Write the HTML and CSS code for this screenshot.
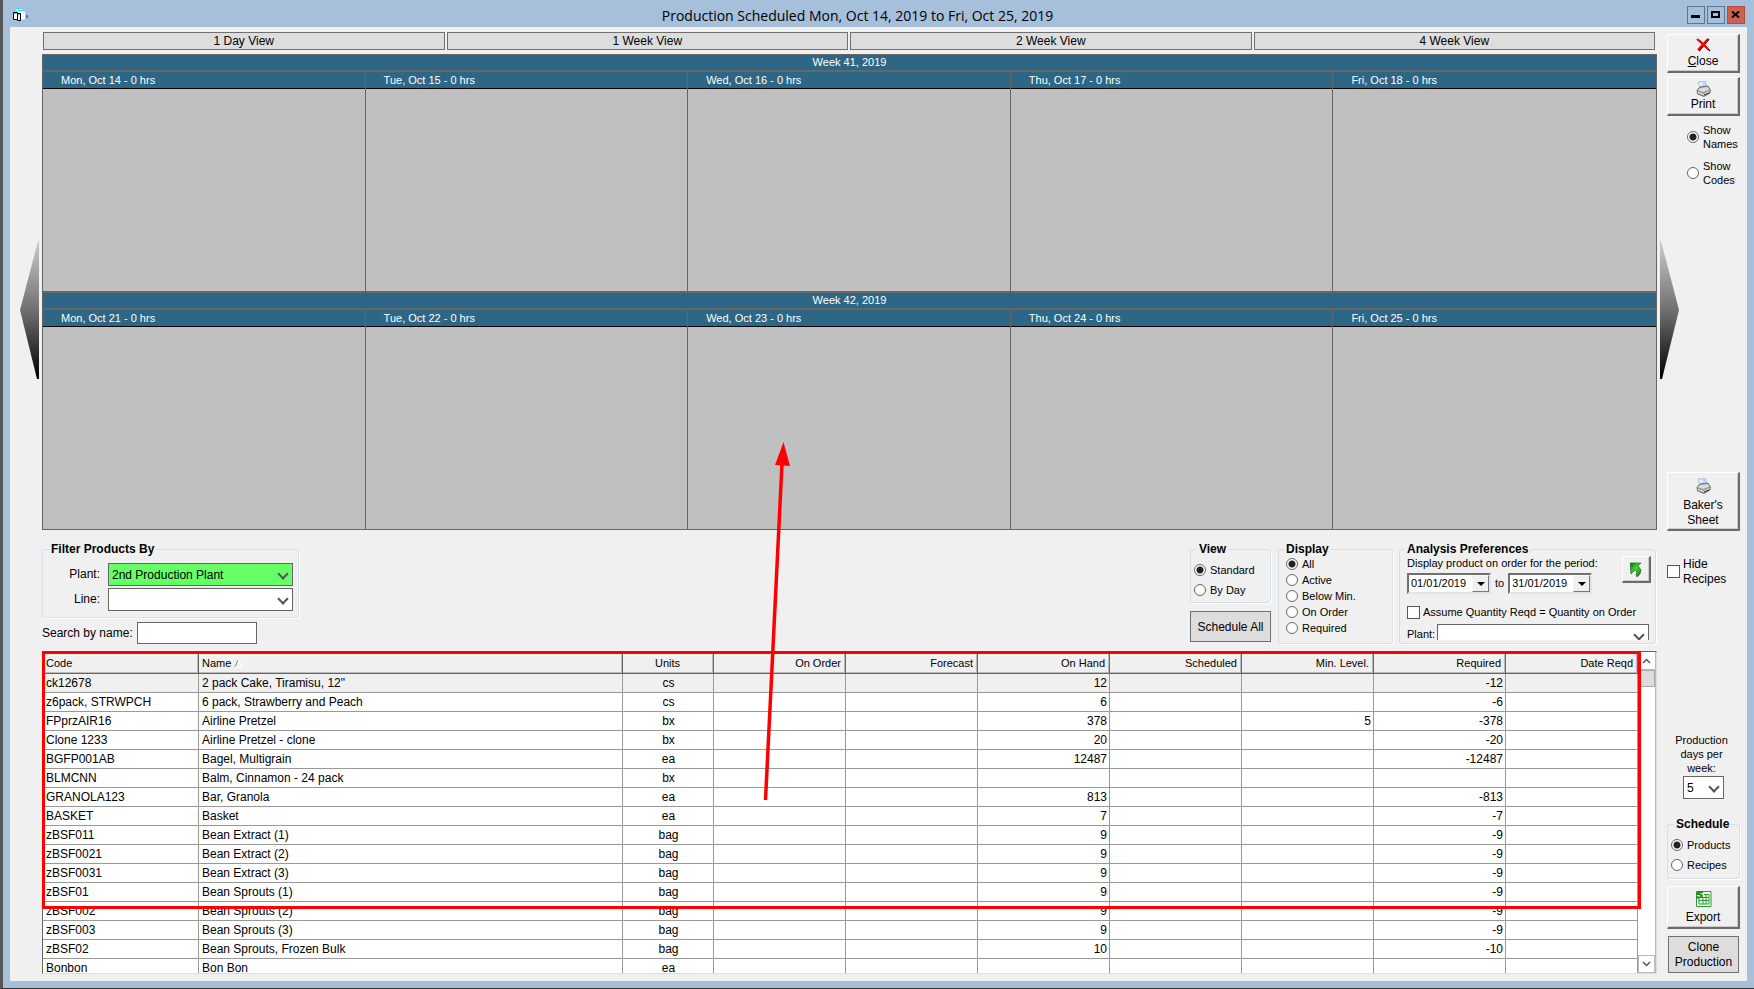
FILE: index.html
```html
<!DOCTYPE html>
<html lang="en">
<head>
	<meta charset="UTF-8">
	<meta name="viewport" content="width=device-width, initial-scale=1.0">
	<title>Production Scheduled</title>
	<link rel="stylesheet" href="styles.css">
</head>
<body>

<!-- shared icons -->
<svg class="defs" width="0" height="0">
	<symbol id="printer" viewBox="0 0 15 16">
		<path d="M2 1 L9 0 L11 6 L4 8 Z" fill="#bcd8fb" stroke="#9db4d0" stroke-width=".6"/>
		<path d="M3 2 L6 1.600 L7 4 L4 5Z" fill="#e8f3ff"/>
		<path d="M1 9 L4 6 L12 5 L14.500 9 L14 12 L8 15.500 L1.500 13 Z" fill="#999" stroke="#666" stroke-width=".8"/>
		<path d="M1.500 9 L4.500 7 L11.500 6 L13.500 8.500 L7.500 11 Z" fill="#dcdcdc"/>
		<path d="M2 11.500 L7.500 13.500 L13.500 10.500" fill="none" stroke="#f4f4f4"/>
		<path d="M8 14 L13.500 11.800" stroke="#333"/>
	</symbol>
</svg>

<header class="titlebar">
	<svg class="app-icon" width="15" height="14" viewBox="0 0 15 14">
		<path d="M3 1 H8 L12 4 V11 L8 12 Z" fill="#fff"/>
		<path d="M3 .5 H7 M5 2.500 H11" stroke="#28e6e6"/>
		<path d="M13 7 h2 v3 h-2z" fill="#777"/>
		<path d="M.5 4.500 H4.500 V11.500 H.5Z" fill="#fff" stroke="#000"/>
		<path d="M4.500 5.500 H7.500 V12.500 H4.500 Z" fill="#fff" stroke="#000"/>
		<path d="M1 5.500 H4 M5 6.500 H7" stroke="#28e6e6"/>
	</svg>
	<h1>Production Scheduled Mon, Oct 14, 2019 to Fri, Oct 25, 2019</h1>
	<div class="window-buttons">
		<button aria-label="Minimize"><svg width="16" height="16"><path d="M3 8h9v3H3z"/></svg></button>
		<button aria-label="Maximize"><svg width="16" height="16"><path d="M3 4h9v7H3z M5 6v3h5V6z" fill-rule="evenodd"/></svg></button>
		<button class="window-close" aria-label="Close window"><svg width="16" height="16"><path d="M4 4.500 L11 10.500 M11 4.500 L4 10.500" stroke="#000" stroke-width="2"/></svg></button>
	</div>
</header>

<div class="window">
	<nav class="gutter">
		<button class="page-arrow" aria-label="Previous weeks">
			<svg width="19" height="138" viewBox="0 0 19 138">
				<linearGradient id="shade" x1="0" y1="0" x2="0" y2="1"><stop offset="0" stop-color="#ccc"/><stop offset=".5" stop-color="#707070"/><stop offset="1" stop-color="#000"/></linearGradient>
				<path d="M19 0 H18 L0 69 L17 138 H19 Z" fill="url(#shade)"/>
			</svg>
		</button>
	</nav>

	<main>
		<div class="tabs">
			<button>1 Day View</button>
			<button>1 Week View</button>
			<button>2 Week View</button>
			<button>4 Week View</button>
		</div>

		<section class="calendar">
			<h2>Week 41, 2019</h2>
			<div class="days">
				<div class="day"><h3>Mon, Oct 14 - 0 hrs</h3></div>
				<div class="day"><h3>Tue, Oct 15 - 0 hrs</h3></div>
				<div class="day"><h3>Wed, Oct 16 - 0 hrs</h3></div>
				<div class="day"><h3>Thu, Oct 17 - 0 hrs</h3></div>
				<div class="day"><h3>Fri, Oct 18 - 0 hrs</h3></div>
			</div>
			<h2>Week 42, 2019</h2>
			<div class="days">
				<div class="day"><h3>Mon, Oct 21 - 0 hrs</h3></div>
				<div class="day"><h3>Tue, Oct 22 - 0 hrs</h3></div>
				<div class="day"><h3>Wed, Oct 23 - 0 hrs</h3></div>
				<div class="day"><h3>Thu, Oct 24 - 0 hrs</h3></div>
				<div class="day"><h3>Fri, Oct 25 - 0 hrs</h3></div>
			</div>
		</section>

		<section class="controls">
			<div class="filters">
				<fieldset class="filter-box">
					<legend>Filter Products By</legend>
					<label for="plant">Plant:</label>
					<div class="combo"><select id="plant" class="picked"><option>2nd Production Plant</option></select></div>
					<label for="line">Line:</label>
					<div class="combo"><select id="line"><option></option></select></div>
				</fieldset>
				<div class="search">
					<label for="search">Search by name:</label>
					<input id="search" type="text">
				</div>
			</div>

			<div class="view-col">
				<fieldset class="view-box small">
					<legend>View</legend>
					<label><input type="radio" name="view" checked>Standard</label>
					<label><input type="radio" name="view">By Day</label>
				</fieldset>
				<button class="flat">Schedule All</button>
			</div>

			<fieldset class="display-box small">
				<legend>Display</legend>
				<label><input type="radio" name="display" checked>All</label>
				<label><input type="radio" name="display">Active</label>
				<label><input type="radio" name="display">Below Min.</label>
				<label><input type="radio" name="display">On Order</label>
				<label><input type="radio" name="display">Required</label>
			</fieldset>

			<fieldset class="analysis-box small">
				<legend>Analysis Preferences</legend>
				<div class="period">
					<div>
						<p>Display product on order for the period:</p>
						<div class="dates">
							<div class="date"><input type="text" value="01/01/2019" aria-label="From"><button aria-label="Pick start date"></button></div>
							<span>to</span>
							<div class="date"><input type="text" value="31/01/2019" aria-label="To"><button aria-label="Pick end date"></button></div>
						</div>
					</div>
					<button class="raised apply" aria-label="Apply period">
						<svg width="12" height="16" viewBox="0 0 12 16">
							<linearGradient id="leaf" x1="0" y1="0" x2="1" y2="1"><stop offset="0" stop-color="#0c6b16"/><stop offset=".45" stop-color="#3fd52c"/><stop offset="1" stop-color="#157c1c"/></linearGradient>
							<path d="M0 1 H11 L8 4 L11 8 L10 12 L7 15 L6 13 L7 10 L5 8 L1 12 Z" fill="url(#leaf)" stroke="#17691b" stroke-width=".7"/>
						</svg>
					</button>
				</div>
				<label class="assume"><input type="checkbox">Assume Quantity Reqd = Quantity on Order</label>
				<div class="plant-row">
					<label for="order-plant">Plant:</label>
					<div class="combo"><select id="order-plant"><option></option></select></div>
				</div>
			</fieldset>
		</section>

		<section class="products">
			<div class="grid">
				<table>
					<colgroup>
						<col class="c-code"><col><col class="c-units">
						<col class="c-num"><col class="c-num"><col class="c-num"><col class="c-num"><col class="c-num"><col class="c-num"><col class="c-num">
					</colgroup>
					<thead>
						<tr><th>Code</th><th>Name <svg width="9" height="9"><path d="M1 8 L4 1" stroke="#888"/><path d="M4 1 L8 8 H1" stroke="#fff" fill="none"/></svg></th><th>Units</th><th>On Order</th><th>Forecast</th><th>On Hand</th><th>Scheduled</th><th>Min. Level.</th><th>Required</th><th>Date Reqd</th></tr>
					</thead>
					<tbody>
						<tr class="current"><td>ck12678</td><td>2 pack Cake, Tiramisu, 12"</td><td>cs</td><td></td><td></td><td>12</td><td></td><td></td><td>-12</td><td></td></tr>
						<tr><td>z6pack, STRWPCH</td><td>6 pack, Strawberry and Peach</td><td>cs</td><td></td><td></td><td>6</td><td></td><td></td><td>-6</td><td></td></tr>
						<tr><td>FPprzAIR16</td><td>Airline Pretzel</td><td>bx</td><td></td><td></td><td>378</td><td></td><td>5</td><td>-378</td><td></td></tr>
						<tr><td>Clone 1233</td><td>Airline Pretzel - clone</td><td>bx</td><td></td><td></td><td>20</td><td></td><td></td><td>-20</td><td></td></tr>
						<tr><td>BGFP001AB</td><td>Bagel, Multigrain</td><td>ea</td><td></td><td></td><td>12487</td><td></td><td></td><td>-12487</td><td></td></tr>
						<tr><td>BLMCNN</td><td>Balm, Cinnamon - 24 pack</td><td>bx</td><td></td><td></td><td></td><td></td><td></td><td></td><td></td></tr>
						<tr><td>GRANOLA123</td><td>Bar, Granola</td><td>ea</td><td></td><td></td><td>813</td><td></td><td></td><td>-813</td><td></td></tr>
						<tr><td>BASKET</td><td>Basket</td><td>ea</td><td></td><td></td><td>7</td><td></td><td></td><td>-7</td><td></td></tr>
						<tr><td>zBSF011</td><td>Bean Extract (1)</td><td>bag</td><td></td><td></td><td>9</td><td></td><td></td><td>-9</td><td></td></tr>
						<tr><td>zBSF0021</td><td>Bean Extract (2)</td><td>bag</td><td></td><td></td><td>9</td><td></td><td></td><td>-9</td><td></td></tr>
						<tr><td>zBSF0031</td><td>Bean Extract (3)</td><td>bag</td><td></td><td></td><td>9</td><td></td><td></td><td>-9</td><td></td></tr>
						<tr><td>zBSF01</td><td>Bean Sprouts (1)</td><td>bag</td><td></td><td></td><td>9</td><td></td><td></td><td>-9</td><td></td></tr>
						<tr><td>zBSF002</td><td>Bean Sprouts (2)</td><td>bag</td><td></td><td></td><td>9</td><td></td><td></td><td>-9</td><td></td></tr>
						<tr><td>zBSF003</td><td>Bean Sprouts (3)</td><td>bag</td><td></td><td></td><td>9</td><td></td><td></td><td>-9</td><td></td></tr>
						<tr><td>zBSF02</td><td>Bean Sprouts, Frozen Bulk</td><td>bag</td><td></td><td></td><td>10</td><td></td><td></td><td>-10</td><td></td></tr>
						<tr><td>Bonbon</td><td>Bon Bon</td><td>ea</td><td></td><td></td><td></td><td></td><td></td><td></td><td></td></tr>
					</tbody>
				</table>
			</div>
			<div class="scrollbar">
				<button aria-label="Scroll up"><svg width="9" height="6"><path d="M1 5 L4.500 1.500 L8 5" fill="none" stroke="#555" stroke-width="1.500"/></svg></button>
				<div class="thumb"></div>
				<button class="down" aria-label="Scroll down"><svg width="9" height="6"><path d="M1 1 L4.500 4.500 L8 1" fill="none" stroke="#555" stroke-width="1.500"/></svg></button>
			</div>
			<div class="highlight"></div>
		</section>

		<!-- drag from the product list up to a day -->
		<svg class="drag-arrow" width="30" height="360" viewBox="0 0 30 360">
			<path d="M4.500 358 L21 22" stroke="#f00" stroke-width="3.500"/>
			<path d="M22.500 0 L29 24 L14 23 Z" fill="#f00"/>
		</svg>
	</main>

	<aside>
		<button class="raised close"><svg width="15" height="14" viewBox="0 0 15 14"><path d="M3 13 L13 1 M3 2 L14 13" stroke="#000" stroke-width="1.300"/><path d="M1 1 L9 8 L12 11 M12 1 L2 12" stroke="#f00" stroke-width="2.200" fill="none"/></svg><span><u>C</u>lose</span></button>
		<button class="raised print"><svg width="15" height="16"><use href="#printer"/></svg><span>Print</span></button>

		<div class="show small">
			<label><input type="radio" name="show" checked>Show<br>Names</label>
			<label><input type="radio" name="show">Show<br>Codes</label>
		</div>

		<button class="page-arrow" aria-label="Next weeks">
			<svg width="19" height="138" viewBox="0 0 19 138"><path d="M0 0 H1 L19 69 L2 138 H0 Z" fill="url(#shade)"/></svg>
		</button>

		<button class="raised bakers"><svg width="15" height="16"><use href="#printer"/></svg><span>Baker's<br>Sheet</span></button>

		<label class="hide"><input type="checkbox">Hide<br>Recipes</label>

		<div class="per-week">
			<label for="per-week">Production<br>days per<br>week:</label>
			<div class="combo"><select id="per-week"><option>5</option></select></div>
		</div>

		<fieldset class="schedule-box small">
			<legend>Schedule</legend>
			<label><input type="radio" name="schedule" checked>Products</label>
			<label><input type="radio" name="schedule">Recipes</label>
		</fieldset>

		<button class="raised export">
			<svg width="17" height="16" viewBox="0 0 17 16" fill="none" stroke="#2f9e2f">
				<path d="M1.500 .5 H16 V15.500 H1.500 Z" fill="#f4fbf4"/>
				<path d="M4 6.500 H14 V13 H4 Z M4 9.500 H14 M8 6 V13 M11 3 V13 M9 3.500 H14 V6"/>
				<path d="M8 1.500 Q3 0 2.500 3 Q6 3 7 5 Q5 7.500 1 6" stroke="#1f8a1f" stroke-width="2"/>
			</svg>
			<span>Export</span>
		</button>
		<button class="flat clone">Clone<br>Production</button>
	</aside>
</div>

</body>
</html>
```

FILE: styles.css
```css
* {
	box-sizing: border-box;
}

body {
	display: flex;
	flex-direction: column;
	min-height: 100vh;
	margin: 0;
	padding: 0 7px 7px;
	border-left: 3px solid #555;
	border-bottom: 1px solid #333;
	background: #a6bfdb;
	color: #000;
	font: 12px/15px "Liberation Sans", Arial, sans-serif;
}

h1, h2, h3, p {
	margin: 0;
	font-weight: normal;
}

button, input, select {
	margin: 0;
	padding: 0;
	border: 0;
	border-radius: 0;
	background: none;
	color: inherit;
	font: inherit;
}

svg {
	display: block;
}

.defs {
	position: absolute;
}

/* title bar */

.titlebar {
	display: flex;
	align-items: center;
	height: 27px;
	padding: 3px 2px 0 3px;
}

.titlebar h1 {
	flex: 1;
	padding-top: 2px;
	text-align: center;
	font: 14px/20px "Open Sans", "Segoe UI", sans-serif;
}

.window-buttons {
	display: flex;
	gap: 2px;
}

.window-buttons button {
	width: 18px;
	height: 18px;
	border: 1px solid #5c7590;
}

.window-buttons .window-close {
	border-color: #b5493a;
	background: #cc6150;
}

.window {
	display: grid;
	grid-template-columns: 32px 1fr 90px;
	flex: 1;
	background: #f0f0f0;
}

.gutter {
	padding: 214px 0 0 10px;
}

main {
	display: flex;
	flex-direction: column;
	position: relative;
	min-width: 0;
	padding: 5px 0 7px;
}

/* view tabs */

.tabs {
	display: grid;
	grid-template-columns: repeat(4, 1fr);
	gap: 2px;
	padding: 0 2px 0 1px;
}

.tabs button, .flat {
	border: 1px solid #707070;
	background: #ddd;
}

.tabs button {
	height: 18px;
	padding-top: 1px;
	line-height: 15px;
}

/* calendar */

.calendar {
	margin-top: 4px;
	border: 1px solid #666;
	background: #c0c0c0;
	color: #fff;
	font-size: 11px;
}

.calendar h2 {
	border-bottom: 2px solid #666;
	background: #2e6785;
	font-size: 11px;
	line-height: 15px;
	text-align: center;
}

.days {
	display: grid;
	grid-template-columns: repeat(5, 1fr);
}

.days + h2 {
	border-top: 2px solid #666;
}

.day {
	height: 219px;
	border-right: 1px solid #666;
}

.day:last-child {
	border-right: 0;
}

.day h3 {
	padding-left: 18px;
	border-bottom: 1px solid #000;
	background: #2e6785;
	font-size: 11px;
	line-height: 16px;
}

/* form parts */

fieldset {
	min-width: 0;
	margin: 0;
	padding: 0;
	border: 1px solid #d5dfe8;
	border-radius: 3px;
	box-shadow: 1px 1px 0 #fff;
}

legend {
	margin-left: 6px;
	padding: 0 2px;
	font-weight: bold;
	font-size: 12px;
	line-height: 14px;
}

.small {
	font-size: 11px;
}

.small legend {
	margin-left: 3px;
}

label {
	display: flex;
	align-items: center;
}

input[type="radio"] {
	flex: none;
	appearance: none;
	width: 12px;
	height: 12px;
	margin-right: 4px;
	border: 1px solid #666;
	border-radius: 50%;
	background: #fff;
}

input[type="radio"]:checked {
	background: radial-gradient(circle, #222 3px, #fff 4px);
}

input[type="checkbox"] {
	flex: none;
	appearance: none;
	width: 13px;
	height: 13px;
	margin-right: 3px;
	border: 1px solid #555;
	background: #fff;
}

.combo {
	position: relative;
}

.combo select {
	display: block;
	appearance: none;
	width: 100%;
	height: 23px;
	padding: 1px 3px 0;
	border: 1px solid #666;
	background: #fff;
}

.combo select.picked {
	background: #66ff66;
}

.combo::after {
	content: "";
	position: absolute;
	top: 7px;
	right: 6px;
	width: 6px;
	height: 6px;
	border: solid #555;
	border-width: 0 2px 2px 0;
	transform: rotate(45deg);
	pointer-events: none;
}

.raised {
	display: flex;
	flex-direction: column;
	align-items: center;
	justify-content: center;
	padding-top: 1px;
	border: solid;
	border-width: 1px 2px 2px 1px;
	border-color: #fff #6b6b6b #6b6b6b #fff;
	background: #f0f0f0;
	box-shadow: inset -1px -1px 0 #ccc;
}

/* filters and preferences */

.controls {
	display: flex;
	align-items: flex-start;
	gap: 6px;
	height: 102px;
	margin: 12px 1px 7px 0;
}

.filters {
	flex: 1;
}

.filter-box {
	display: grid;
	grid-template-columns: 57px 185px;
	align-content: start;
	gap: 2px 8px;
	width: 257px;
	height: 76px;
	padding-top: 7px;
}

.filter-box label {
	justify-content: flex-end;
}

.search {
	display: flex;
	gap: 4px;
	margin-top: 4px;
}

.search input {
	width: 120px;
	height: 22px;
	border: 1px solid #666;
	background: #fff;
}

.view-col {
	width: 81px;
	margin-right: 1px;
}

.view-box {
	height: 61px;
	padding-left: 3px;
}

.view-box label, .schedule-box label {
	height: 20px;
}

.view-box label:first-of-type, .schedule-box label:first-of-type {
	margin-top: 4px;
}

.view-col .flat {
	width: 100%;
	height: 31px;
	margin-top: 8px;
	padding-top: 1px;
}

.display-box {
	width: 115px;
	height: 102px;
	padding-left: 7px;
}

.display-box legend, .analysis-box legend {
	margin-left: -2px;
}

.display-box label {
	height: 16px;
}

.analysis-box {
	width: 257px;
	height: 102px;
	padding-left: 7px;
}

.period {
	display: flex;
	justify-content: space-between;
	padding-right: 4px;
}

.dates {
	display: flex;
	align-items: center;
	gap: 4px;
	margin-top: 2px;
}

.date {
	display: flex;
	width: 84px;
	height: 21px;
	border: 2px solid;
	border-color: #707070 #e4e4e4 #e4e4e4 #707070;
	background: #fff;
}

.date input {
	flex: 1;
	min-width: 0;
	padding-left: 2px;
}

.date button {
	display: grid;
	place-items: center;
	width: 17px;
	border: 1px solid;
	border-color: #f8f8f8 #777 #777 #f8f8f8;
	background: #f0f0f0;
}

.date button::after {
	content: "";
	border: solid transparent;
	border-width: 4px 4px 0;
	border-top-color: #000;
}

.apply {
	width: 29px;
	height: 27px;
}

.assume {
	margin-top: 11px;
}

.plant-row {
	display: flex;
	gap: 2px;
	height: 16px;
	margin-top: 4px;
	overflow: hidden;
}

.plant-row label {
	height: 20px;
}

.plant-row .combo {
	flex: 1;
	margin-right: 6px;
}

/* product list */

.products {
	display: flex;
	position: relative;
	flex: 1 1 0;
	min-height: 322px;
	border: 1px solid #666;
	border-color: #666 #ddd #ddd #666;
	background: #fff;
}

.grid {
	flex: 1;
	height: 321px;
	overflow: hidden;
}

table {
	width: 100%;
	table-layout: fixed;
	border-spacing: 0;
}

.c-code { width: 156px; }
.c-units { width: 91px; }
.c-num { width: 132px; }

th {
	height: 22px;
	padding: 2px 4px 0 3px;
	border-right: 1px solid #666;
	border-bottom: 1px solid #666;
	background: #f0f0f0;
	box-shadow: inset -1px -1px 0 #bbb;
	font-weight: normal;
	font-size: 11px;
	text-align: right;
}

th svg {
	display: inline;
	vertical-align: -1px;
}

td {
	height: 19px;
	padding: 0 2px 0 3px;
	border-right: 1px solid #999;
	border-bottom: 1px solid #999;
	line-height: 12px;
	text-align: right;
	white-space: nowrap;
}

th:nth-child(-n+2), td:nth-child(-n+2) {
	text-align: left;
}

th:nth-child(3), td:nth-child(3) {
	text-align: center;
}

.current td {
	background: #f0f0f0;
}

.scrollbar {
	display: flex;
	flex-direction: column;
	width: 18px;
	border-right: 1px solid #bbb;
}

.scrollbar button {
	display: grid;
	place-items: center;
	height: 18px;
	border-bottom: 1px solid #bbb;
}

.scrollbar .down {
	margin-top: auto;
	border: 1px solid #bbb;
}

.thumb {
	height: 17px;
	border: 1px solid #aaa;
	background: #ddd;
}

.highlight {
	position: absolute;
	top: -1px;
	left: -1px;
	right: 15px;
	height: 258px;
	border: 3px solid #f00;
}

.drag-arrow {
	position: absolute;
	top: 415px;
	left: 719px;
	pointer-events: none;
}

/* right side */

aside {
	display: flex;
	flex-direction: column;
	padding: 7px 7px 8px 10px;
}

.close, .print {
	gap: 2px;
	height: 39px;
}

.print {
	gap: 0;
	margin-top: 4px;
}

.show {
	display: grid;
	gap: 8px;
	margin: 7px 0 54px 20px;
	line-height: 14px;
}

.show label, .hide {
	position: relative;
	display: block;
	padding-left: 16px;
}

.show input, .hide input {
	position: absolute;
	top: 8px;
	left: 0;
}

aside .page-arrow {
	align-self: flex-start;
	margin-left: -7px;
}

.bakers {
	gap: 4px;
	height: 59px;
	margin-top: 93px;
	padding-top: 3px;
}

.hide {
	margin-top: 26px;
}

.per-week {
	display: flex;
	flex-direction: column;
	align-items: center;
	gap: 1px;
	margin: auto 4px 18px 0;
	font-size: 11px;
	line-height: 14px;
	text-align: center;
}

.per-week .combo {
	width: 41px;
	margin-left: 4px;
	font-size: 12px;
}

.schedule-box {
	height: 62px;
	padding-left: 3px;
}

.export {
	gap: 3px;
	height: 43px;
	margin-top: 7px;
	padding-top: 2px;
}

.clone {
	height: 37px;
	margin: 7px 1px 0;
}
```
